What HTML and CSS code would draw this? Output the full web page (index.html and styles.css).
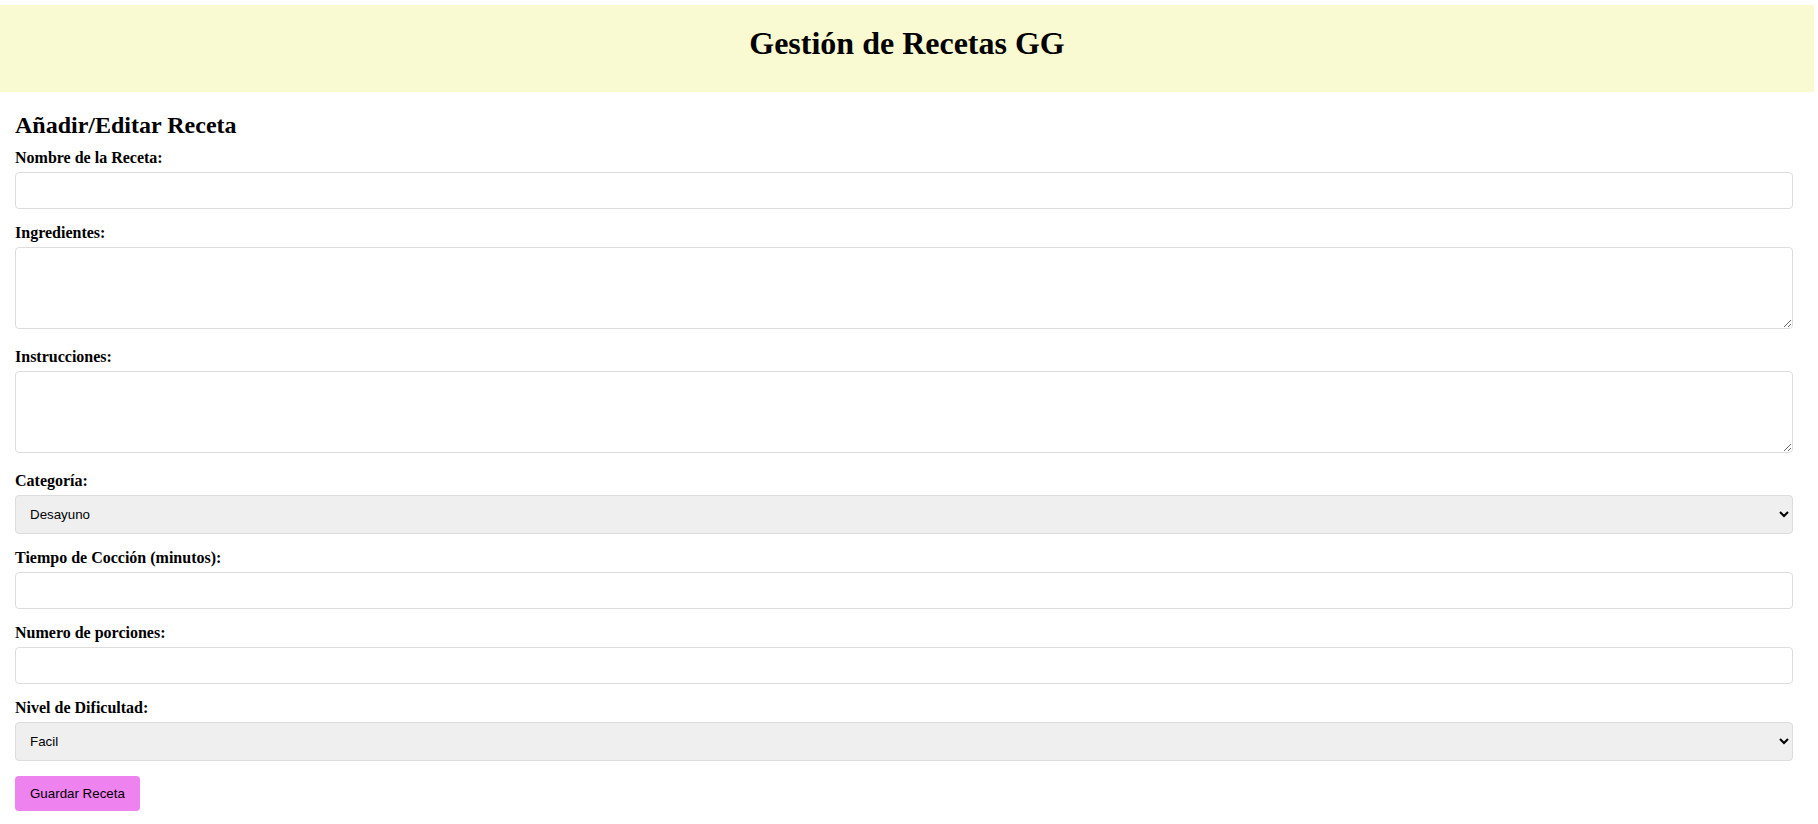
FILE: index.html
```html
<!DOCTYPE html>
<html lang="es">
<head>
<meta charset="utf-8">
<title>Gestión de Recetas GG</title>
<link rel="stylesheet" href="styles.css">
</head>
<body>
<header class="header">
  <h1 class="title">Gestión de Recetas GG</h1>
</header>
<main class="main">
  <h2 class="form-title">Añadir/Editar Receta</h2>
  <form class="form">
    <div class="field">
      <label class="label" for="nombre">Nombre de la Receta:</label>
      <input class="control input" type="text" id="nombre">
    </div>
    <div class="field field-area">
      <label class="label" for="ingredientes">Ingredientes:</label>
      <textarea class="control area" id="ingredientes"></textarea>
    </div>
    <div class="field field-area">
      <label class="label" for="instrucciones">Instrucciones:</label>
      <textarea class="control area" id="instrucciones"></textarea>
    </div>
    <div class="field">
      <label class="label" for="categoria">Categoría:</label>
      <select class="control select" id="categoria">
        <option>Desayuno</option>
        <option>Almuerzo</option>
        <option>Cena</option>
        <option>Postre</option>
      </select>
    </div>
    <div class="field">
      <label class="label" for="tiempo">Tiempo de Cocción (minutos):</label>
      <input class="control input" type="number" id="tiempo">
    </div>
    <div class="field">
      <label class="label" for="porciones">Numero de porciones:</label>
      <input class="control input" type="number" id="porciones">
    </div>
    <div class="field">
      <label class="label" for="dificultad">Nivel de Dificultad:</label>
      <select class="control select" id="dificultad">
        <option>Facil</option>
        <option>Medio</option>
        <option>Dificil</option>
      </select>
    </div>
    <button class="btn" type="button">Guardar Receta</button>
  </form>
</main>
</body>
</html>
```
FILE: styles.css
```css
body {
  margin: 0;
  font-family: "Liberation Serif", "Times New Roman", serif;
  color: #000;
  background: #fff;
}

.header {
  margin: 5px 4px 0 0;
  padding: 20px 0 30px;
  background: #fafad2;
  text-align: center;
}

.title {
  margin: 0;
  font-size: 32px;
  font-weight: bold;
}

.main {
  padding: 0 25px 0 15px;
}

.form-title {
  margin: 20px 0 10px;
  font-size: 24px;
  font-weight: bold;
}

.field {
  margin-bottom: 15px;
}

.field-area {
  margin-bottom: 19px;
}

.label {
  display: block;
  margin-bottom: 5px;
  font-size: 16px;
  font-weight: bold;
}

.control {
  display: block;
  width: 100%;
  box-sizing: border-box;
  margin: 0;
  padding: 10px;
  border: 1px solid #dddddd;
  border-radius: 4px;
  font-family: "Liberation Sans", Arial, sans-serif;
  font-size: 13.33px;
  color: #000;
  background-color: #fff;
}

.input {
  height: 37px;
}

.area {
  height: 82px;
  resize: both;
}

.select {
  height: 39px;
  background-color: #efefef;
}

.btn {
  display: block;
  height: 35px;
  padding: 10px 15px;
  border: none;
  border-radius: 4px;
  background: #ee82ee;
  color: #000;
  font-family: "Liberation Sans", Arial, sans-serif;
  font-size: 13.33px;
  line-height: 15px;
  cursor: pointer;
}
```
